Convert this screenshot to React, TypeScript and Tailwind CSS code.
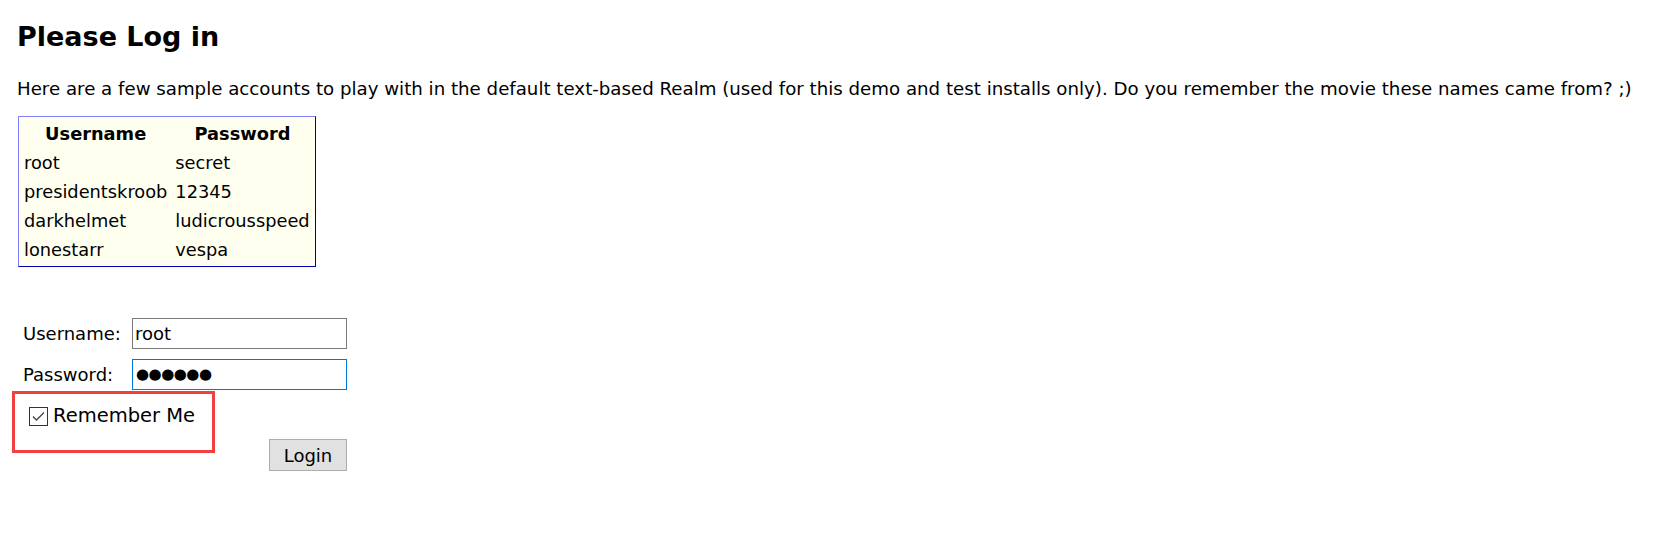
import { useState } from "react";

const accounts = [
  { username: "root", password: "secret" },
  { username: "presidentskroob", password: "12345" },
  { username: "darkhelmet", password: "ludicrousspeed" },
  { username: "lonestarr", password: "vespa" },
];

export default function App() {
  const [username, setUsername] = useState("root");
  const [password] = useState("secret");
  const [remember, setRemember] = useState(true);

  return (
    <main className="min-h-screen bg-white px-[17px] pt-[21px] font-['DejaVu_Sans',Verdana,sans-serif] text-black">
      <h2 className="text-[27px] font-bold leading-[32px]">Please Log in</h2>

      <p className="mt-[25px] text-[18.2px] leading-[22px]">
        Here are a few sample accounts to play with in the default text-based Realm (used for this demo and test
        installs only). Do you remember the movie these names came from? ;)
      </p>

      <table className="mt-[16px] ml-px border-separate border-spacing-[2px] border border-t-[#8080ff] border-l-[#8080ff] border-r-[#0000b0] border-b-[#0000b0] bg-[#fffff0] pt-[2px] text-[17.8px]">
        <thead>
          <tr>
            <th className="h-[27px] px-[3px] py-0 text-center font-bold">Username</th>
            <th className="h-[27px] px-[3px] py-0 text-center font-bold">Password</th>
          </tr>
        </thead>
        <tbody>
          {accounts.map((a) => (
            <tr key={a.username}>
              <td className="h-[27px] px-[3px] py-0">{a.username}</td>
              <td className="h-[27px] px-[3px] py-0">{a.password}</td>
            </tr>
          ))}
        </tbody>
      </table>

      <form
        className="relative mt-[51px] ml-[6px] w-[324px]"
        onSubmit={(e) => e.preventDefault()}
      >
        <div className="flex h-[31px] items-center">
          <label className="w-[109px] text-[18px]">Username:</label>
          <input
            type="text"
            value={username}
            onChange={(e) => setUsername(e.target.value)}
            className="h-[31px] w-[215px] border border-[#7a7a7a] px-[2px] text-[18px] outline-none"
          />
        </div>

        <div className="mt-[10px] flex h-[31px] items-center">
          <label className="w-[109px] text-[18px]">Password:</label>
          <div className="flex h-[31px] w-[215px] items-center border border-[#0078d7] px-[3px] text-[15px] tracking-[-0.5px]">
            {"●".repeat(password.length)}
          </div>
        </div>

        <label
          className="mt-[16px] ml-[6px] flex h-[20px] cursor-pointer items-center gap-[5px] text-[19.5px]"
          onClick={() => setRemember(!remember)}
        >
          <span className="flex h-[19px] w-[19px] items-center justify-center border border-[#333333] bg-white">
            {remember && (
              <svg width="13" height="10" viewBox="0 0 13 10" fill="none">
                <path d="M1 5.5L4.5 9L12 1.5" stroke="#444444" strokeWidth="1.3" />
              </svg>
            )}
          </span>
          Remember Me
        </label>

        <div className="mt-[13px] flex justify-end">
          <button
            type="submit"
            className="h-[32px] w-[78px] border border-[#adadad] bg-[#e1e1e1] text-[18px]"
          >
            Login
          </button>
        </div>

        {/* annotation box */}
        <div className="pointer-events-none absolute left-[-11px] top-[73px] h-[62px] w-[203px] border-[3px] border-[#f04040]" />
      </form>
    </main>
  );
}
